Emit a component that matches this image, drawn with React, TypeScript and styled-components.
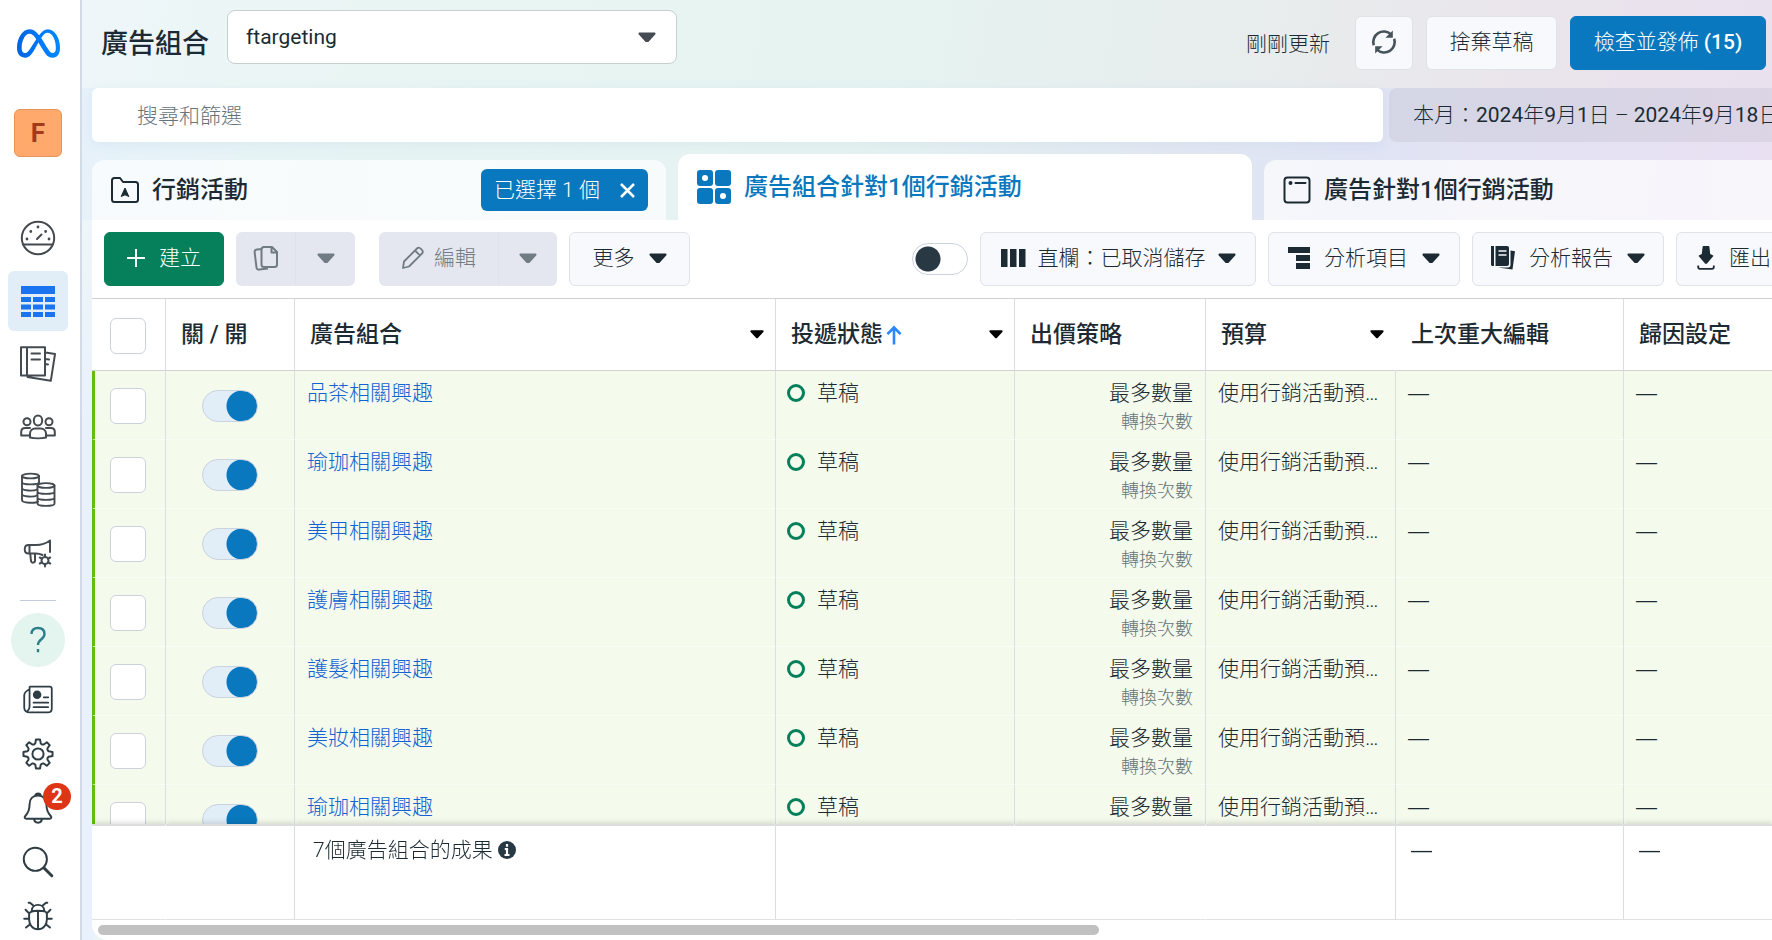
import React from 'react';
import styled, { createGlobalStyle, css } from 'styled-components';
import { FaMeta } from 'react-icons/fa6';

const GlobalStyle = createGlobalStyle`
  * { box-sizing: border-box; }
  html, body { margin: 0; height: 100%; }
  body {
    font-family: Roboto, "Noto Sans CJK TC", sans-serif;
    font-size: 21px;
    line-height: 28px;
    color: #1c2b33;
    overflow: hidden;
  }
  button, input, select { font: inherit; color: inherit; margin: 0; }
  a { text-decoration: none; color: inherit; }
`;

/* ---------- shell ---------- */

const Shell = styled.div`
  display: flex;
  height: 100vh;
  overflow: hidden;
`;

const Sidebar = styled.nav`
  flex: none;
  width: 82px;
  padding: 16px 4px 0 0;
  display: flex;
  flex-direction: column;
  align-items: center;
  overflow: hidden;
  background: #fff;
  border-right: 2px solid #d3dbe6;
`;

const LogoLink = styled.a`
  display: grid;
  place-items: center;
  flex: none;
  height: 54px;
`;

const GradientDefs = styled.svg`
  position: absolute;
`;

const Account = styled.button`
  flex: none;
  width: 48px;
  height: 48px;
  margin: 39px 0 51px;
  padding: 0;
  border: 1px solid #e8935a;
  border-radius: 6px;
  background: #ffa96d;
  color: #a33a1c;
  font-size: 26px;
  font-weight: 700;
`;

const NavGroup = styled.div`
  display: flex;
  flex-direction: column;
  align-items: center;
  gap: 3px;
`;

const NavItem = styled.a<{ $active?: boolean }>`
  display: grid;
  place-items: center;
  width: 60px;
  height: 60px;
  border-radius: 6px;
  color: ${(p) => (p.$active ? '#1a73f0' : '#444b50')};
  background: ${(p) => (p.$active ? '#e1edf7' : 'transparent')};
`;

const Divider = styled.hr`
  flex: none;
  width: 36px;
  margin: 17px 0 12px;
  border: 0;
  border-top: 1px solid #c3cbdc;
`;

const Help = styled.button`
  flex: none;
  display: grid;
  place-items: center;
  width: 54px;
  height: 54px;
  margin-bottom: 6px;
  padding: 0;
  border: 0;
  border-radius: 50%;
  background: #e4f4ef;
  color: #2e7f8c;
`;

const UtilItem = styled.a`
  position: relative;
  flex: none;
  display: grid;
  place-items: center;
  width: 60px;
  height: 54px;
  color: #2f3d45;
`;

const Badge = styled.span`
  position: absolute;
  top: 2px;
  right: -3px;
  width: 28px;
  height: 27px;
  border-radius: 14px;
  background: #dd3516;
  color: #fff;
  font-size: 20px;
  font-weight: 700;
  line-height: 27px;
  text-align: center;
`;

const Main = styled.main`
  flex: 1;
  min-width: 0;
  display: flex;
  flex-direction: column;
  padding-left: 10px;
  background:
    linear-gradient(180deg, rgba(233, 241, 253, 0) 220px, #e9f1fd 420px) 0 0 / 12px 100% no-repeat,
    linear-gradient(90deg, rgba(225, 238, 250, 0.6) 0%, rgba(225, 240, 245, 0.4) 10%, rgba(225, 240, 242, 0.2) 45%, rgba(221, 226, 246, 0.8) 75%, rgba(232, 224, 244, 0.6) 100%) 0 88px / 100% 132px no-repeat,
    linear-gradient(100deg, #eef6f9 0%, #e9f5f3 16%, #e6f3f0 45%, #e8ecec 66%, #eae4ec 80%, #eadff0 100%);
`;

/* ---------- header ---------- */

const Header = styled.header`
  display: flex;
  align-items: center;
  height: 88px;
  padding: 0 6px 2px 9px;
`;

const Title = styled.h1`
  margin: 2px 18px 0 0;
  font-size: 27px;
  line-height: 32px;
  font-weight: 500;
  white-space: nowrap;
`;

const AccountSelect = styled.div`
  display: grid;
  align-items: center;
  width: 450px;
  margin-bottom: 12px;
  > * { grid-area: 1 / 1; }
  > svg { justify-self: end; margin-right: 21px; pointer-events: none; }
`;

const Select = styled.select`
  appearance: none;
  width: 100%;
  height: 54px;
  padding: 0 52px 0 18px;
  border: 1px solid #c5d0d0;
  border-radius: 8px;
  background: #fff;
`;

const HeaderActions = styled.div`
  display: flex;
  align-items: center;
  margin-left: auto;
  gap: 13px;
`;

const Updated = styled.span`
  margin: 2px 12px 0 0;
  font-weight: 300;
  white-space: nowrap;
`;

const boxButton = css`
  display: flex;
  align-items: center;
  justify-content: center;
  flex: none;
  height: 54px;
  padding: 0 0 2px;
  border: 1px solid #dfe2e8;
  border-radius: 6px;
  background: #f8f9fc;
  font-weight: 300;
  white-space: nowrap;
`;

const HeaderButton = styled.button<{ $width: number; $primary?: boolean }>`
  ${boxButton}
  width: ${(p) => p.$width}px;
  ${(p) => p.$primary && css`
    border-color: #0a78be;
    background: #0a78be;
    color: #fff;
  `}
  b { font-weight: 500; margin-left: 5px; }
`;

/* ---------- search ---------- */

const FilterRow = styled.div`
  display: flex;
  gap: 6px;
  height: 54px;
  flex: none;
`;

const Search = styled.input`
  flex: 1;
  min-width: 0;
  padding: 2px 45px 0;
  border: 0;
  border-radius: 6px;
  background: #fff;
  font-weight: 300;
  box-shadow: 0 2px 12px rgba(120, 170, 210, 0.12);
  &::placeholder { color: #67747c; opacity: 1; }
`;

const DateButton = styled.button`
  flex: none;
  width: 383px;
  padding: 0 0 0 24px;
  border: 0;
  border-radius: 8px 0 0 8px;
  background: rgba(40, 40, 60, 0.065);
  text-align: left;
  white-space: nowrap;
  overflow: hidden;
  font-weight: 300;
  b { font-weight: 400; }
`;

/* ---------- tabs ---------- */

const Tabs = styled.div`
  display: grid;
  grid-template-columns: 574fr 574fr 508fr;
  align-items: end;
  gap: 12px;
  flex: none;
  height: 78px;
`;

const Tab = styled.div<{ $active?: boolean }>`
  min-width: 0;
  display: flex;
  align-items: center;
  height: ${(p) => (p.$active ? 66 : 60)}px;
  padding: 0 18px 0 19px;
  border-radius: 12px 12px 0 0;
  background: ${(p) => (p.$active ? '#fff' : 'rgba(255, 255, 255, 0.68)')};
  color: ${(p) => (p.$active ? '#0a78be' : '#1c2b33')};
  font-size: 24px;
  font-weight: 500;
  white-space: nowrap;
  overflow: hidden;
  &:last-child { border-top-right-radius: 0; }
`;

const TabLink = styled.button`
  display: flex;
  align-items: center;
  gap: 13px;
  padding: 0;
  border: 0;
  background: none;
`;

const Selected = styled.button`
  display: flex;
  align-items: center;
  justify-content: space-between;
  width: 167px;
  height: 42px;
  margin-left: auto;
  padding: 0 13px;
  border: 0;
  border-radius: 6px;
  background: #0a78be;
  color: #fff;
  font-size: 21px;
  font-weight: 300;
`;

/* ---------- toolbar ---------- */

const Panel = styled.section`
  flex: 1;
  min-height: 0;
  display: flex;
  flex-direction: column;
  overflow: hidden;
  background: #fff;
  border-bottom-left-radius: 16px;
`;

const Toolbar = styled.div`
  display: flex;
  align-items: center;
  gap: 12px;
  flex: none;
  height: 78px;
  padding-left: 12px;
`;

const ToolButton = styled.button<{ $width: number; $gap?: number; $tone?: 'create' | 'cut' }>`
  ${boxButton}
  width: ${(p) => p.$width}px;
  gap: ${(p) => p.$gap ?? 14}px;
  ${(p) => p.$tone === 'create' && css`
    border-color: #05805a;
    background: #05805a;
    color: #fff;
  `}
  ${(p) => p.$tone === 'cut' && css`
    justify-content: flex-start;
    padding-left: 20px;
    border-right: 0;
    border-radius: 6px 0 0 6px;
    overflow: hidden;
  `}
`;

const SplitButton = styled.div`
  display: flex;
  flex: none;
  border-radius: 6px;
  overflow: hidden;
  & + & { margin-left: 12px; }
`;

const SplitPart = styled.button<{ $width: number }>`
  display: flex;
  align-items: center;
  justify-content: center;
  gap: 9px;
  width: ${(p) => p.$width}px;
  height: 54px;
  padding: 0 0 2px;
  border: 0;
  background: #e4e7f0;
  color: #717b84;
  font-weight: 300;
  & + & { border-left: 1px solid #dfe2eb; }
`;

const MoreSlot = styled.div`
  margin-right: auto;
`;

const Switch = styled.input`
  appearance: none;
  display: block;
  flex: none;
  width: 56px;
  height: 32px;
  border: 1px solid #cbd2e0;
  border-radius: 16px;
  background:
    radial-gradient(circle at 15px 15px, #283943 12px, transparent 13px) no-repeat,
    #fff;
  &:checked {
    background:
      radial-gradient(circle at 39px 15px, #0a78be 15px, transparent 16px) no-repeat,
      #e1edf7;
  }
`;

/* ---------- table ---------- */

const Scroller = styled.div`
  flex: 1;
  min-height: 0;
  overflow: auto;
  scrollbar-width: none;
  border-top: 1px solid #cfd1d4;
`;

const Table = styled.table`
  width: 100%;
  table-layout: fixed;
  border-collapse: separate;
  border-spacing: 0;
`;

const HeadCell = styled.th<{ $open?: boolean }>`
  position: sticky;
  top: 0;
  z-index: 2;
  height: 72px;
  padding: 0 16px 0 15px;
  background: #fff;
  border-bottom: 1px solid #cfd1d4;
  border-right: 1px solid ${(p) => (p.$open ? 'transparent' : '#dadde1')};
  font-size: 23px;
  font-weight: 500;
  text-align: left;
  white-space: nowrap;
  &:first-child { padding: 2px 0 0 18px; }
  &:last-child { border-right: 0; }
`;

const HeadInner = styled.div`
  display: flex;
  align-items: center;
  gap: 3px;
  > svg:last-child { margin-left: auto; margin-right: -5px; }
`;

const Row = styled.tr`
  > td:first-child { border-left: 3px solid #63be09; }
`;

const Cell = styled.td<{ $right?: boolean; $mid?: boolean }>`
  height: 69px;
  padding: ${(p) => (p.$mid ? '2px 15px 0' : '8px 12px 0')};
  background: #f4faec;
  border-right: 1px solid #dadde1;
  border-bottom: 1px solid #fafdf6;
  vertical-align: ${(p) => (p.$mid ? 'middle' : 'top')};
  text-align: ${(p) => (p.$right ? 'right' : 'left')};
  font-weight: 300;
  white-space: nowrap;
  overflow: hidden;
  text-overflow: ellipsis;
  &:last-child { border-right: 0; }
`;

const Empty = styled.span`
  font-family: "Liberation Sans", sans-serif;
  font-weight: 400;
`;

const NameLink = styled.a`
  color: #1262d1;
`;

const Status = styled.span`
  display: flex;
  align-items: center;
  gap: 12px;
  margin-left: -1px;
`;

const Dot = styled.span`
  width: 18px;
  height: 18px;
  border: 3px solid #05805a;
  border-radius: 50%;
`;

const Note = styled.small`
  display: block;
  font-size: 18px;
  line-height: 30px;
  color: #66757a;
`;

const CheckBox = styled.input`
  appearance: none;
  display: block;
  width: 36px;
  height: 36px;
  border: 1px solid #cbd2dc;
  border-radius: 6px;
  background: #fff;
`;

const SwitchSlot = styled.div`
  display: flex;
  justify-content: flex-end;
  padding-right: 21px;
`;

const FootCell = styled.td<{ $open?: boolean }>`
  position: sticky;
  bottom: 0;
  z-index: 2;
  height: 96px;
  padding: 10px 15px 0;
  background: #fff;
  border-top: 2px solid #dcdedc;
  border-bottom: 1px solid #e0e2e5;
  border-right: 1px solid ${(p) => (p.$open ? 'transparent' : '#dadde1')};
  box-shadow: 0 -2px 5px rgba(0, 0, 0, 0.12);
  clip-path: inset(-8px 0 0 0);
  vertical-align: top;
  font-weight: 300;
  white-space: nowrap;
  &:last-child { border-right: 0; }
`;

const Summary = styled.span`
  display: flex;
  align-items: center;
  gap: 5px;
  padding-left: 3px;
`;

const ScrollTrack = styled.div`
  flex: none;
  height: 20px;
  padding: 5px 6px;
`;

const ScrollThumb = styled.div`
  width: 60%;
  height: 10px;
  border-radius: 5px;
  background: #c1c1c1;
`;

/* ---------- icons ---------- */

const Caret = ({ w = 18, color = 'currentColor' }: { w?: number; color?: string }) => (
  <svg width={w} height={w * 0.6} viewBox="0 0 20 12" fill={color} aria-hidden="true">
    <path d="M2 0.5h16c1.4 0 2 1.3 1.1 2.3l-7.6 8.2c-.9 1-2.1 1-3 0L.9 2.8C0 1.800.6.5 2 .5z" />
  </svg>
);

const Line = ({ size = 36, w = 2, children }: { size?: number; w?: number; children: React.ReactNode }) => (
  <svg width={size} height={size} viewBox="0 0 36 36" fill="none" stroke="currentColor" strokeWidth={w} strokeLinecap="round" strokeLinejoin="round" aria-hidden="true">
    {children}
  </svg>
);

const Gauge = () => (
  <Line>
    <circle cx="18" cy="18" r="16.200" />
    <path d="M3.500 24.500h29M17 19l4.500-4.500" />
    <path d="M7 19v.1M10.800 11.500v.1M18 7v.1M25.600 11.500v.1M29 19v.1" strokeWidth="2.800" />
  </Line>
);

const GridIcon = () => (
  <svg width="36" height="36" viewBox="0 0 36 36" fill="currentColor" aria-hidden="true">
    <path d="M1 3h34v8H1zM1 14h10v5H1zM13 14h10v5H13zM25 14h10v5H25zM1 21.500h10v5H1zM13 21.500h10v5H13zM25 21.500h10v5H25zM1 29h10v5H1zM13 29h10v5H13zM25 29h10v5H25z" />
  </svg>
);

const Book = () => (
  <Line>
    <path d="M1 1.200h24v28.300H1zM7 1.200v28.300M11.500 7.500h8.500M11.500 13.500h8.500M25.500 6.500l9.500 1.600-4.200 26.700L7.500 31l.2-1.200M25.500 13l3.500.5M25.500 18l2.500.4" />
  </Line>
);

const People = () => (
  <Line>
    <ellipse cx="18" cy="11.500" rx="4.200" ry="5" />
    <circle cx="7" cy="12.800" r="3.500" />
    <circle cx="29" cy="12.800" r="3.500" />
    <path d="M10 28.500v-4c0-3 2.500-5 5-5h6c2.500 0 5 2 5 5v4c-4 1-12 1-16 0zM10 26.500H1.200V23c0-2.500 1.800-4 4-4H10M26 26.500h8.800V23c0-2.500-1.800-4-4-4H26" />
  </Line>
);

const Coins = () => (
  <Line w={1.9}>
    <ellipse cx="10.500" cy="4" rx="8.500" ry="2.400" />
    <path d="M2 4v24c0 3.400 14 3.400 16 1.500M19 4v7M2 10c0 3.200 17 3.200 17 0M2 16c0 3 12 3.200 15 1.500M2 22c0 3 12 3.200 15 1.500" />
    <ellipse cx="26" cy="13.500" rx="8.500" ry="2.400" />
    <path d="M17.500 13.500v18c0 3.200 17 3.200 17 0v-18M17.500 19.500c0 3.200 17 3.200 17 0M17.500 25.500c0 3.200 17 3.200 17 0" />
  </Line>
);

const Megaphone = () => (
  <Line>
    <path d="M30 17V5.500c-4 3-9 4.500-14 4.500H8.500c-5 0-5 8.500 0 8.500H16c2.500 0 4.500.5 6.500 1.500M9.500 10v8.500M10.200 18.500l.8 7.500c.5 2.500 4 2 4-.5v-7" />
    <circle cx="25" cy="25.500" r="3.500" />
    <path d="M25 19.500v2.500M25 29v2.500M19.800 22.500l2.200 1.200M28 27.300l2.200 1.200M30.200 22.500L28 23.700M22 27.300l-2.200 1.200" />
  </Line>
);

const News = () => (
  <Line size={32}>
    <path d="M9 3h22c1.500 0 2.500 1 2.500 2.500v22c0 3-1.500 4.500-4.500 4.500H9c-4 0-6.500-2-6.500-5.500V13c0-2.500 1.200-4.500 5-6.500M8.500 3.500v22c0 3-1.500 4-2.500 5" />
    <circle cx="17" cy="12" r="3.800" fill="currentColor" />
    <path d="M13 21h16.500M13 26h16.500M24.500 15h5" />
  </Line>
);

const Gear = () => {
  const teeth = Array.from({ length: 8 }, (_, i) => i * 45);
  const pt = (r: number, a: number) => {
    const t = ((a - 90) * Math.PI) / 180;
    return `${(18 + r * Math.cos(t)).toFixed(2)} ${(18 + r * Math.sin(t)).toFixed(2)}`;
  };
  const d = teeth
    .map((a, i) => `${i ? 'L' : 'M'}${pt(12.5, a - 14)}L${pt(16.5, a - 8)}L${pt(16.5, a + 8)}L${pt(12.5, a + 14)}Q${pt(11, a + 22.5)} ${pt(12.5, a + 31)}`)
    .join('');
  return (
    <Line size={32} w={2.200}>
      <path d={`${d}Z`} />
      <circle cx="18" cy="18" r="6.300" />
    </Line>
  );
};

const Bell = () => (
  <Line size={32} w={2.200}>
    <path d="M18 4c-6 0-9.500 4-9.500 10 0 7-2 10-4.800 13-1.400 1.500-.6 3 1.300 3h26c1.900 0 2.700-1.500 1.300-3-2.800-3-4.800-6-4.800-13 0-6-3.500-10-9.500-10zM15 4c0-3 6-3 6 0M13.500 30c.5 6 8.500 6 9 0" />
  </Line>
);

const Magnifier = () => (
  <Line size={32} w={2.200}>
    <circle cx="15" cy="15" r="13" />
    <path d="M24.500 24.500l9 9" strokeWidth="3.400" />
  </Line>
);

const Bug = () => (
  <Line size={32} w={2.200}>
    <path d="M8 16c0-3 3-4 10-4s10 1 10 4v6c0 6-4 11-10 11S8 28 8 22zM11 12c0-4 3-6.500 7-6.500s7 2.500 7 6.500M18 12v21M8 21H2.500M33.500 21H28M8 15l-4-4M28 15l4-4M9.500 27l-5 4M26.500 27l5 4M13 6.500L9 3M23 6.500L27 3M9 3H7.500M27 3h1.500" />
  </Line>
);

const Question = () => (
  <svg width="20" height="28" viewBox="0 0 20 28" fill="none" stroke="currentColor" strokeWidth="2.400" aria-hidden="true">
    <path d="M3.500 8C3.500 4 6 2 10 2s6.500 2.300 6.500 6c0 5.500-6.500 5-6.500 11M10 23v3.200" />
  </svg>
);

const Refresh = () => (
  <svg width="26" height="26" viewBox="0 0 28 28" fill="none" stroke="#46535b" strokeWidth="2.800" aria-hidden="true">
    <path d="M3 17.500A11.300 11.300 0 0 1 21.500 5.800M25 10.500A11.300 11.300 0 0 1 6.500 22.200" />
    <path d="M23.500 1.500v8h-8zM4.500 26.500v-8h8z" fill="#46535b" stroke="none" />
  </svg>
);

const Folder = () => (
  <svg width="28" height="28" viewBox="0 0 28 28" fill="none" stroke="currentColor" strokeWidth="2" strokeLinejoin="round" aria-hidden="true">
    <path d="M1 4.500C1 3 2 2 3.500 2H9l3 4h12.500C26 6 27 7 27 8.500v15c0 1.500-1 2.500-2.500 2.500h-21C2 26 1 25 1 23.500z" />
    <path d="M14 12l3.800 8.500L14 18.800l-3.800 1.700z" fill="currentColor" strokeWidth="1" />
  </svg>
);

const AdSets = () => (
  <svg width="34" height="34" viewBox="0 0 34 34" fill="currentColor" fillRule="evenodd" aria-hidden="true">
    <path d="M3 0h10a3 3 0 0 1 3 3v10a3 3 0 0 1-3 3H3a3 3 0 0 1-3-3V3a3 3 0 0 1 3-3zm5 5a3 3 0 1 0 0 6 3 3 0 0 0 0-6z" />
    <rect x="18" width="16" height="16" rx="3" />
    <rect y="18" width="16" height="16" rx="3" />
    <path d="M21 18h10a3 3 0 0 1 3 3v10a3 3 0 0 1-3 3H21a3 3 0 0 1-3-3V21a3 3 0 0 1 3-3zm5 5a3 3 0 1 0 0 6 3 3 0 0 0 0-6z" />
  </svg>
);

const AdIcon = () => (
  <svg width="28" height="28" viewBox="0 0 28 28" fill="none" stroke="currentColor" strokeWidth="2" aria-hidden="true">
    <rect x="1.500" y="1.500" width="25" height="25" rx="3" />
    <path d="M12.500 7h10" strokeLinecap="round" />
    <circle cx="7.500" cy="7" r="1" fill="currentColor" />
  </svg>
);

const Cross = () => (
  <svg width="15" height="15" viewBox="0 0 15 15" stroke="currentColor" strokeWidth="2.500" aria-hidden="true">
    <path d="M1 1l13 13M14 1L1 14" />
  </svg>
);

const Plus = () => (
  <svg width="18" height="18" viewBox="0 0 18 18" stroke="currentColor" strokeWidth="2" aria-hidden="true">
    <path d="M9 0v18M0 9h18" />
  </svg>
);

const Copy = () => (
  <svg width="26" height="26" viewBox="0 0 26 26" fill="none" stroke="currentColor" strokeWidth="2" strokeLinejoin="round" aria-hidden="true">
    <path d="M11 2h8l5 5v12.500c0 1.500-1 2.500-2.500 2.500H11c-1.500 0-2.500-1-2.500-2.500v-15C8.500 3 9.500 2 11 2zM18.500 2v5.500H24M8.500 4L4 4.500C2.500 4.700 1.500 5.500 1.600 7l1.900 15.500c.2 1.500 1.200 2.300 2.700 2.100L15 23.500" />
  </svg>
);

const Pencil = () => (
  <svg width="24" height="24" viewBox="0 0 24 24" fill="none" stroke="currentColor" strokeWidth="1.800" strokeLinejoin="round" aria-hidden="true">
    <path d="M2 22l1-6.500L16.500 2c1.800-1.500 6.500 2.800 5 5L8 20.500zM14 4.500l5.300 5.300" />
  </svg>
);

const Columns = () => (
  <svg width="25" height="18" viewBox="0 0 25 18" fill="currentColor" aria-hidden="true">
    <path d="M0 0h6.500v18H0zM9 0h6.500v18H9zM18 0h6.500v18H18z" />
  </svg>
);

const Breakdown = () => (
  <svg width="22" height="22" viewBox="0 0 22 22" fill="currentColor" aria-hidden="true">
    <path d="M0 0h22v6H0zM8 8h14v6H8zM8 16h14v6H8z" />
  </svg>
);

const Report = () => (
  <svg width="24" height="24" viewBox="0 0 24 24" fill="currentColor" aria-hidden="true">
    <path d="M0 0h3v20H1.500C.6 20 0 19.400 0 18.500zM4.500 0H16c1.200 0 2 .8 2 2v16c0 1.200-.8 2-2 2H4.500z" />
    <path d="M7.500 5h8M7.500 9h8" stroke="#f8f9fc" strokeWidth="1.600" />
    <path d="M19.500 4.500l4.500.8-2.500 18.200L7 21.500h10c1.600 0 2.500-1 2.500-2.500z" />
  </svg>
);

const Download = () => (
  <svg width="18" height="24" viewBox="0 0 18 24" fill="currentColor" aria-hidden="true">
    <path d="M6.500 0h5c.5 0 .8.300.9.800l.8 7.200 2.600 1.300c.6.300.7.800.2 1.300l-6 7c-.6.600-1.400.6-2 0l-6-7c-.5-.5-.4-1 .2-1.300L4.800 8l.8-7.200c.1-.5.4-.8.9-.8z" />
    <path d="M1.200 19.500v1.500c0 1.200.6 1.800 1.800 1.800h12c1.200 0 1.800-.6 1.800-1.800v-1.500" fill="none" stroke="currentColor" strokeWidth="1.800" />
  </svg>
);

const SortUp = () => (
  <svg width="16" height="20" viewBox="0 0 17 20" fill="none" stroke="#2d88ff" strokeWidth="2.800" aria-hidden="true">
    <path d="M8.500 20V2M1.500 9l7-7 7 7" />
  </svg>
);

const Info = () => (
  <svg width="18" height="18" viewBox="0 0 18 18" aria-hidden="true">
    <circle cx="9" cy="9" r="9" fill="#283943" />
    <path d="M9 3v2.800M6.800 8H9v6M6.500 14h5" stroke="#fff" strokeWidth="2.200" fill="none" />
  </svg>
);

/* ---------- data ---------- */

const NAV = [
  { label: '帳號總覽', Icon: Gauge },
  { label: '廣告', Icon: GridIcon, active: true },
  { label: '報告', Icon: Book },
  { label: '廣告受眾', Icon: People },
  { label: '帳單', Icon: Coins },
  { label: '廣告設定', Icon: Megaphone },
];

const UTILS = [
  { label: '最新消息', Icon: News },
  { label: '設定', Icon: Gear },
  { label: '通知', Icon: Bell, count: 2 },
  { label: '搜尋', Icon: Magnifier },
  { label: '回報問題', Icon: Bug },
];

const AD_SETS = [
  '品茶相關興趣',
  '瑜珈相關興趣',
  '美甲相關興趣',
  '護膚相關興趣',
  '護髮相關興趣',
  '美妝相關興趣',
  '瑜珈相關興趣',
];

const WIDTHS = [74, 129, 481, 239, 191, 190, 228];

export default function App() {
  return (
    <Shell>
      <GlobalStyle />
      <Sidebar>
        <LogoLink href="#" aria-label="Meta">
          <GradientDefs width="0" height="0" aria-hidden="true">
            <linearGradient id="meta" x1="0" x2="1">
              <stop offset="0" stopColor="#0064e0" />
              <stop offset="0.5" stopColor="#0078f5" />
              <stop offset="1" stopColor="#0088ff" />
            </linearGradient>
          </GradientDefs>
          <FaMeta size={43} fill="url(#meta)" />
        </LogoLink>
        <Account>F</Account>
        <NavGroup>
          {NAV.map(({ label, Icon, active }) => (
            <NavItem key={label} href="#" aria-label={label} $active={active}>
              <Icon />
            </NavItem>
          ))}
        </NavGroup>
        <Divider />
        <Help aria-label="說明"><Question /></Help>
        {UTILS.map(({ label, Icon, count }) => (
          <UtilItem key={label} href="#" aria-label={label}>
            <Icon />
            {count && <Badge>{count}</Badge>}
          </UtilItem>
        ))}
      </Sidebar>

      <Main>
        <Header>
          <Title>廣告組合</Title>
          <AccountSelect>
            <Select aria-label="廣告帳號" defaultValue="ftargeting">
              <option>ftargeting</option>
            </Select>
            <Caret color="#444b53" />
          </AccountSelect>
          <HeaderActions>
            <Updated>剛剛更新</Updated>
            <HeaderButton $width={58} aria-label="重新整理"><Refresh /></HeaderButton>
            <HeaderButton $width={131}>捨棄草稿</HeaderButton>
            <HeaderButton $width={196} $primary>檢查並發佈<b>(15)</b></HeaderButton>
          </HeaderActions>
        </Header>

        <FilterRow>
          <Search aria-label="搜尋和篩選" placeholder="搜尋和篩選" />
          <DateButton>
            本月：<b>2024</b>年<b>9</b>月<b>1</b>日 – <b>2024</b>年<b>9</b>月<b>18</b>日
          </DateButton>
        </FilterRow>

        <Tabs>
          <Tab>
            <TabLink><Folder />行銷活動</TabLink>
            <Selected>已選擇 1 個<Cross /></Selected>
          </Tab>
          <Tab $active>
            <TabLink><AdSets />廣告組合針對1個行銷活動</TabLink>
          </Tab>
          <Tab>
            <TabLink><AdIcon />廣告針對1個行銷活動</TabLink>
          </Tab>
        </Tabs>

        <Panel>
          <Toolbar>
            <ToolButton $width={120} $gap={14} $tone="create"><Plus />建立</ToolButton>
            <SplitButton>
              <SplitPart $width={59} aria-label="複製"><Copy /></SplitPart>
              <SplitPart $width={60} aria-label="複製選項"><Caret /></SplitPart>
            </SplitButton>
            <SplitButton>
              <SplitPart $width={119}><Pencil />編輯</SplitPart>
              <SplitPart $width={59} aria-label="編輯選項"><Caret /></SplitPart>
            </SplitButton>
            <MoreSlot>
              <ToolButton $width={121}>更多<Caret /></ToolButton>
            </MoreSlot>
            <Switch type="checkbox" role="switch" aria-label="檢視設定" />
            <ToolButton $width={276} $gap={12}><Columns />直欄：已取消儲存<Caret /></ToolButton>
            <ToolButton $width={192}><Breakdown />分析項目<Caret /></ToolButton>
            <ToolButton $width={192}><Report />分析報告<Caret /></ToolButton>
            <ToolButton $width={96} $tone="cut"><Download />匯出</ToolButton>
          </Toolbar>

          <Scroller>
            <Table>
              <colgroup>
                {WIDTHS.map((w, i) => <col key={i} width={w} />)}
                <col />
              </colgroup>
              <thead>
                <tr>
                  <HeadCell scope="col"><CheckBox type="checkbox" aria-label="全選" /></HeadCell>
                  <HeadCell scope="col">關 / 開</HeadCell>
                  <HeadCell scope="col"><HeadInner>廣告組合<Caret w={14} color="#000" /></HeadInner></HeadCell>
                  <HeadCell scope="col"><HeadInner>投遞狀態<SortUp /><Caret w={14} color="#000" /></HeadInner></HeadCell>
                  <HeadCell scope="col">出價策略</HeadCell>
                  <HeadCell scope="col" $open><HeadInner>預算<Caret w={14} color="#000" /></HeadInner></HeadCell>
                  <HeadCell scope="col">上次重大編輯</HeadCell>
                  <HeadCell scope="col">歸因設定</HeadCell>
                </tr>
              </thead>
              <tbody>
                {AD_SETS.map((name, i) => (
                  <Row key={i}>
                    <Cell $mid><CheckBox type="checkbox" aria-label={`選擇${name}`} /></Cell>
                    <Cell $mid>
                      <SwitchSlot>
                        <Switch type="checkbox" role="switch" aria-label={`開啟${name}`} defaultChecked />
                      </SwitchSlot>
                    </Cell>
                    <Cell><NameLink href="#">{name}</NameLink></Cell>
                    <Cell><Status><Dot />草稿</Status></Cell>
                    <Cell $right>最多數量<Note>轉換次數</Note></Cell>
                    <Cell>使用行銷活動預算</Cell>
                    <Cell><Empty>—</Empty></Cell>
                    <Cell><Empty>—</Empty></Cell>
                  </Row>
                ))}
              </tbody>
              <tfoot>
                <tr>
                  <FootCell $open />
                  <FootCell />
                  <FootCell><Summary>7個廣告組合的成果<Info /></Summary></FootCell>
                  <FootCell $open />
                  <FootCell $open />
                  <FootCell />
                  <FootCell><Empty>—</Empty></FootCell>
                  <FootCell><Empty>—</Empty></FootCell>
                </tr>
              </tfoot>
            </Table>
          </Scroller>
          <ScrollTrack><ScrollThumb /></ScrollTrack>
        </Panel>
      </Main>
    </Shell>
  );
}
